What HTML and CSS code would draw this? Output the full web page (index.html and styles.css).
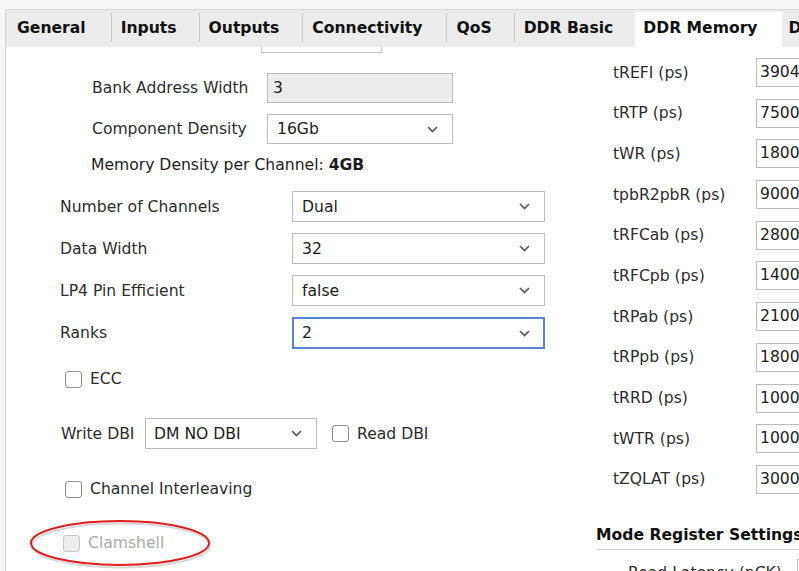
FILE: index.html
```html
<!DOCTYPE html>
<html>
<head>
<meta charset="utf-8">
<link rel="stylesheet" href="styles.css">
</head>
<body>
<div class="window">
  <div class="tabs">
    <div class="tab first">General</div>
    <div class="tab">Inputs</div>
    <div class="tab outputs">Outputs</div>
    <div class="tab conn">Connectivity</div>
    <div class="tab">QoS</div>
    <div class="tab noborder">DDR Basic</div>
    <div class="tab active">DDR Memory</div>
    <div class="tab last">DDR Timing</div>
  </div>
  <div class="content">
    <div class="left">
      <div class="stub"></div>
      <div class="sub">
        <div class="row">
          <span class="label sublabel">Bank Address Width</span>
          <div class="field readonly">3</div>
        </div>
        <div class="row">
          <span class="label sublabel">Component Density</span>
          <div class="field select"><span>16Gb</span><svg class="chev" width="11" height="7" viewBox="0 0 11 7"><path d="M1 1l4.5 4.5L10 1" stroke="#5a5a5a" stroke-width="1.7" fill="none"/></svg></div>
        </div>
        <div class="density">Memory Density per Channel: <b>4GB</b></div>
      </div>
      <div class="main">
        <div class="row mrow">
          <span class="label mlabel">Number of Channels</span>
          <div class="field select wide"><span>Dual</span><svg class="chev" width="11" height="7" viewBox="0 0 11 7"><path d="M1 1l4.5 4.5L10 1" stroke="#5a5a5a" stroke-width="1.7" fill="none"/></svg></div>
        </div>
        <div class="row mrow">
          <span class="label mlabel">Data Width</span>
          <div class="field select wide"><span>32</span><svg class="chev" width="11" height="7" viewBox="0 0 11 7"><path d="M1 1l4.5 4.5L10 1" stroke="#5a5a5a" stroke-width="1.7" fill="none"/></svg></div>
        </div>
        <div class="row mrow">
          <span class="label mlabel">LP4 Pin Efficient</span>
          <div class="field select wide"><span>false</span><svg class="chev" width="11" height="7" viewBox="0 0 11 7"><path d="M1 1l4.5 4.5L10 1" stroke="#5a5a5a" stroke-width="1.7" fill="none"/></svg></div>
        </div>
        <div class="row mrow">
          <span class="label mlabel">Ranks</span>
          <div class="field select wide focused"><span>2</span><svg class="chev" width="11" height="7" viewBox="0 0 11 7"><path d="M1 1l4.5 4.5L10 1" stroke="#5a5a5a" stroke-width="1.7" fill="none"/></svg></div>
        </div>
      </div>
      <div class="check ecc"><span class="box"></span><span>ECC</span></div>
      <div class="row dbi">
        <span class="label">Write DBI</span>
        <div class="field select dbisel"><span>DM NO DBI</span><svg class="chev" width="11" height="7" viewBox="0 0 11 7"><path d="M1 1l4.5 4.5L10 1" stroke="#5a5a5a" stroke-width="1.7" fill="none"/></svg></div>
        <div class="check inline"><span class="box"></span><span>Read DBI</span></div>
      </div>
      <div class="check interleave"><span class="box"></span><span>Channel Interleaving</span></div>
      <div class="check clam disabled">
        <span class="box"></span><span>Clamshell</span>
        <svg class="ring" width="184" height="52" viewBox="0 0 184 52">
          <ellipse cx="92" cy="27.5" rx="89" ry="22" fill="none" stroke="#c8c8c8" stroke-width="2" opacity="0.7"/>
          <ellipse cx="91" cy="25" rx="89" ry="22" fill="none" stroke="#e21b1b" stroke-width="2"/>
        </svg>
      </div>
    </div>
    <div class="right">
      <div class="timings">
        <div class="trow"><span class="tlabel">tREFI (ps)</span><div class="tfield">3904000</div></div>
        <div class="trow"><span class="tlabel">tRTP (ps)</span><div class="tfield">7500</div></div>
        <div class="trow"><span class="tlabel">tWR (ps)</span><div class="tfield">18000</div></div>
        <div class="trow"><span class="tlabel">tpbR2pbR (ps)</span><div class="tfield">90000</div></div>
        <div class="trow"><span class="tlabel">tRFCab (ps)</span><div class="tfield">280000</div></div>
        <div class="trow"><span class="tlabel">tRFCpb (ps)</span><div class="tfield">140000</div></div>
        <div class="trow"><span class="tlabel">tRPab (ps)</span><div class="tfield">21000</div></div>
        <div class="trow"><span class="tlabel">tRPpb (ps)</span><div class="tfield">18000</div></div>
        <div class="trow"><span class="tlabel">tRRD (ps)</span><div class="tfield">10000</div></div>
        <div class="trow"><span class="tlabel">tWTR (ps)</span><div class="tfield">10000</div></div>
        <div class="trow"><span class="tlabel">tZQLAT (ps)</span><div class="tfield">30000</div></div>
      </div>
      <div class="section">Mode Register Settings</div>
      <div class="trow mr"><span class="tlabel mrlabel">Read Latency (nCK)</span><div class="tfield">14</div></div>
    </div>
  </div>
</div>
</body>
</html>
```
FILE: styles.css
```css
html, body {
  margin: 0;
  padding: 0;
}
body {
  width: 799px;
  height: 571px;
  overflow: hidden;
  background: #f6f6f6;
  font-family: "DejaVu Sans", sans-serif;
  font-size: 15.6px;
  color: #2c2c2c;
}
.window {
  margin: 9px 0 0 5px;
  border-left: 1px solid #d2d2d2;
  border-top: 1px solid #dadada;
  height: 561px;
  width: 793px;
  overflow: hidden;
}
.tabs {
  display: flex;
  align-items: flex-start;
  height: 37px;
  background: #ececec;
  white-space: nowrap;
}
.tab {
  margin-top: 3px;
  height: 29px;
  line-height: 31px;
  padding: 0 22px 0 9px;
  border-right: 1px solid #c9c9c9;
  font-weight: bold;
  color: #111;
}
.tab.first { padding-left: 11px; padding-right: 25px; }
.tab.outputs { padding-right: 23px; }
.tab.conn { padding-right: 24px; }
.tab.noborder { border-right: none; padding-right: 22px; }
.tab.active {
  margin-top: 2px;
  height: 35px;
  line-height: 33px;
  background: #fff;
  border-right: none;
  padding: 0 24px 0 8px;
}
.tab.last { padding-left: 7px; border-right: none; }

.content {
  display: flex;
  background: #fff;
  height: 524px;
}
.left {
  width: 590px;
  flex: none;
  display: flex;
  flex-direction: column;
}
.stub {
  margin-left: 255px;
  width: 119px;
  height: 5px;
  border: 1px solid #c4c4c4;
  border-top: none;
}
.row {
  display: flex;
  align-items: center;
}
.label { flex: none; white-space: nowrap; }
.sub {
  padding-left: 86px;
  margin-top: 20px;
  display: flex;
  flex-direction: column;
  gap: 11px;
}
.sublabel { width: 175px; }
.field {
  box-sizing: border-box;
  height: 30px;
  width: 186px;
  border: 1px solid #bcbcbc;
  background: #fff;
  color: #1c1c1c;
  display: flex;
  align-items: center;
  white-space: nowrap;
}
.readonly {
  background: #ececec;
  padding-left: 5px;
}
.select {
  justify-content: space-between;
  padding: 0 14px 0 9px;
}
.chev { flex: none; }
.density {
  margin-left: -1px;
  line-height: 20px;
  color: #1c1c1c;
}
.density b { font-weight: bold; }
.main {
  padding-left: 54px;
  margin-top: 16px;
  display: flex;
  flex-direction: column;
  gap: 11px;
}
.mlabel { width: 232px; }
.wide { width: 253px; height: 31px; }
.focused {
  border: 2px solid #5585d8;
  padding-left: 8px;
  padding-right: 13px;
  height: 32px;
}
.check {
  display: flex;
  align-items: center;
  gap: 8px;
  white-space: nowrap;
  color: #2c2c2c;
}
.box {
  box-sizing: border-box;
  width: 17px;
  height: 17px;
  border: 1px solid #8e8e8e;
  border-radius: 3px;
  background: #fff;
  flex: none;
}
.ecc {
  margin: 21px 0 0 59px;
}
.dbi {
  margin: 30px 0 0 55px;
}
.dbi .label { width: 84px; }
.dbisel { width: 172px; height: 31px; padding-left: 8px; }
.inline { margin-left: 15px; }
.interleave { margin: 31px 0 0 59px; }
.clam {
  margin: 36px 0 0 57px;
  position: relative;
}
.disabled { color: #a9a9a9; }
.disabled .box {
  border-color: #c6c6c6;
  background: #ededed;
}
.ring {
  position: absolute;
  left: -34px;
  top: -16px;
}
.right {
  flex: none;
  width: 203px;
  overflow: hidden;
}
.timings {
  padding: 11px 0 0 17px;
  display: flex;
  flex-direction: column;
  gap: 11.7px;
}
.trow {
  display: flex;
  align-items: center;
}
.tlabel { width: 143px; flex: none; white-space: nowrap; }
.tfield {
  box-sizing: border-box;
  width: 110px;
  flex: none;
  height: 29px;
  border: 1px solid #bcbcbc;
  padding-left: 3px;
  line-height: 27px;
  color: #1c1c1c;
}
.section {
  margin-top: 31px;
  font-weight: bold;
  color: #111;
  line-height: 20px;
  padding-bottom: 4px;
  border-bottom: 1px solid #cfcfcf;
  white-space: nowrap;
}
.mr { padding-left: 32px; margin-top: 9px; }
.mrlabel { width: 169px; }
```
